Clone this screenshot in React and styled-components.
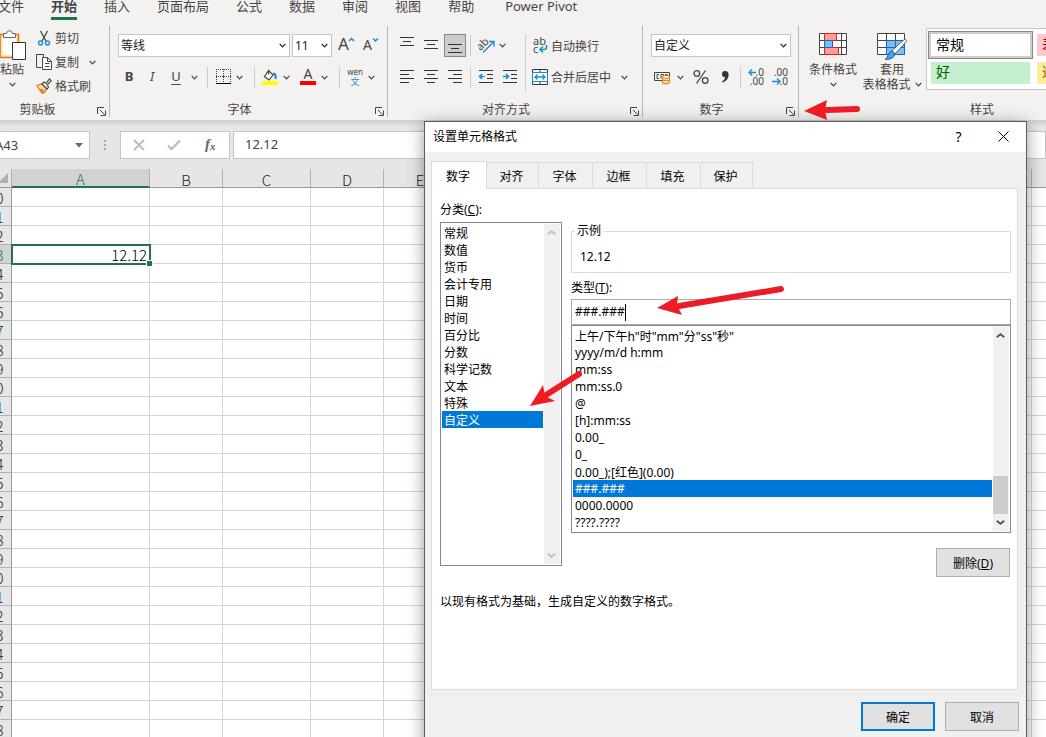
import React, { useState } from 'react';
import styled, { createGlobalStyle } from 'styled-components';

const uiFont = '"Noto Sans", "Noto Sans CJK SC", sans-serif';
const cellFont = '"Noto Sans CJK SC", "Noto Sans", sans-serif';

const ink = '#444444';
const blue = '#1e8bcd';
const green = '#217346';
const select = '#0078d7';

const GlobalStyle = createGlobalStyle`
  * {
    box-sizing: border-box;
  }

  body {
    margin: 0;
    font-family: ${uiFont};
    font-size: 12px;
    color: #000;
  }

  button, input, select {
    font: inherit;
    color: inherit;
    margin: 0;
    padding: 0;
    border: 0;
    border-radius: 0;
    background: none;
    outline: none;
  }

  svg {
    display: block;
    flex: none;
  }
`;

const Page = styled.div`
  position: relative;
  display: flex;
  flex-direction: column;
  height: 100vh;
  overflow: hidden;
  background: #e6e6e6;
`;

/* ---------- ribbon ---------- */

const Ribbon = styled.header`
  flex: none;
  background: #f3f2f1;
  color: ${ink};
  height: 120px;
`;

const RibbonTabs = styled.nav`
  display: flex;
  gap: 27px;
  height: 20px;
  margin-left: -2px;
  font-size: 13px;
`;

const RibbonTab = styled.button`
  line-height: 12px;
  padding-bottom: 5px;
  white-space: nowrap;
  border-bottom: 3px solid ${p => (p.$active ? green : 'transparent')};
  font-weight: ${p => (p.$active ? 700 : 400)};

  &:last-child {
    margin-left: 4px;
  }
`;

const Groups = styled.div`
  display: flex;
  padding-top: 6px;
  margin-left: -16px;
`;

const GroupBox = styled.section`
  display: flex;
  flex: none;
  flex-direction: column;
  justify-content: space-between;
  width: ${p => p.$width}px;
  height: 91px;
  border-right: 1px solid #b8b6b4;
`;

const GroupBody = styled.div`
  display: flex;
  padding: 8px 7px 0 8px;
`;

const GroupFooter = styled.div`
  display: flex;
  align-items: center;
  height: 15px;
  padding-right: 3px;
`;

const GroupName = styled.span`
  flex: 1;
  text-align: center;
  line-height: 15px;
`;

const Launcher = styled.button`
  margin-left: 6px;
  padding-top: 3px;
`;

const Rows = styled.div`
  display: flex;
  flex-direction: column;
  gap: 9px;
`;

const Row = styled.div`
  display: flex;
  align-items: center;
  height: ${p => p.$height || 22}px;
`;

const Tool = styled.button`
  display: flex;
  align-items: center;
  justify-content: center;
  gap: 3px;
  flex: none;
  width: ${p => (p.$width ? p.$width + 'px' : 'auto')};
  height: ${p => (p.$pressed ? 23 : 22)}px;
  margin-left: ${p => p.$gap || 0}px;
  white-space: nowrap;
  background: ${p => (p.$pressed ? '#cdcccb' : 'none')};
  border: ${p => (p.$pressed ? '1px solid #8a8886' : '0')};
`;

const Letter = styled.span`
  font-size: 13px;
  line-height: 16px;
  padding-bottom: 2px;
  font-weight: ${p => (p.$bold ? 700 : 400)};
  font-style: ${p => (p.$italic ? 'italic' : 'normal')};
  text-decoration: ${p => (p.$underline ? 'underline' : 'none')};
  text-underline-offset: 3px;
`;

const Divider = styled.span`
  flex: none;
  width: 1px;
  height: ${p => p.$height || 21}px;
  margin: 0 ${p => p.$right}px 0 ${p => p.$left}px;
  background: #cfcdcb;
`;

const ComboBox = styled.label`
  display: grid;
  align-items: center;
  width: ${p => p.$width}px;
  height: 23px;
  border: 1px solid #c6c6c6;
  background: #fff;

  & + & {
    margin-left: 2px;
  }

  > * {
    grid-area: 1 / 1;
  }

  svg {
    justify-self: end;
    margin-right: 3px;
    pointer-events: none;
  }
`;

const ComboSelect = styled.select`
  appearance: none;
  width: 100%;
  height: 21px;
  padding-left: 2px;
  line-height: 21px;
  color: #222;
`;

const BigTool = styled.button`
  display: flex;
  flex-direction: column;
  align-items: center;
  width: ${p => p.$width}px;
  line-height: 15px;
  white-space: nowrap;
`;

const BigIcon = styled.span`
  display: flex;
  align-items: flex-start;
  height: ${p => p.$height || 29}px;
`;

const BigLine = styled.span`
  display: flex;
  align-items: center;
  justify-content: center;
  gap: 4px;
  height: 15px;
`;

const ClipBody = styled(GroupBody)`
  align-items: flex-start;
  padding: 0 0 0 7px;

  ${BigTool} {
    padding-top: 4px;
  }
`;

const ClipList = styled.div`
  display: flex;
  flex-direction: column;
  align-items: flex-start;
  margin-left: 3px;

  button {
    height: 24px;
  }
`;

const StyleBody = styled(GroupBody)`
  padding: 2px 0 0 5px;
  align-items: flex-start;
`;

const BigTools = styled.div`
  display: flex;
  padding-top: 5px;
`;

const Gallery = styled.div`
  display: grid;
  grid-template-columns: repeat(2, 105px);
  grid-auto-rows: 28px;
  gap: 0 1px;
  height: 62px;
  margin-left: 4px;
  padding: 2px 1px;
  border: 1px solid #c8c6c4;
  background: #fff;
  font-size: 14px;
`;

const StyleCell = styled.button`
  text-align: left;
  line-height: 19px;
  padding: 0 5px 3px;
  color: ${p => p.$color};
  background: ${p => p.$fill} padding-box;
  border: 3px solid transparent;
  ${p => p.$active && `
    padding: 0 7px 1px;
    border: 1px solid #8a8886;
    box-shadow: inset 0 0 0 2px #cfcdcb;
  `}
`;

/* ---------- formula bar ---------- */

const FormulaBar = styled.div`
  display: flex;
  flex: none;
  align-items: flex-start;
  height: 49px;
  padding-top: 11px;
  background: linear-gradient(#cecece, #e6e6e6 7px);
  color: ${ink};
`;

const NameBox = styled.label`
  display: flex;
  align-items: center;
  width: 110px;
  height: 28px;
  margin-left: -20px;
  padding: 0 6px 0 14px;
  border: 1px solid #c6c6c6;
  background: #fff;

  input {
    flex: 1;
    min-width: 0;
    font-size: 13px;
  }
`;

const Grip = styled.span`
  display: grid;
  gap: 2px;
  margin: 9px 14px 0;

  i {
    width: 2px;
    height: 2px;
    background: #a6a6a6;
  }
`;

const EntryButtons = styled.div`
  display: flex;
  align-items: center;
  justify-content: space-between;
  width: 110px;
  height: 28px;
  padding: 0 12px;
  border: 1px solid #c6c6c6;
  background: #fff;
`;

const FormulaInput = styled.input`
  flex: 1;
  height: 28px;
  margin-left: 3px;
  padding: 0 11px 2px;
  border: 1px solid #c6c6c6;
  background: #fff;
  font-size: 13px;
`;

/* ---------- sheet ---------- */

const SheetArea = styled.main`
  flex: 1;
  min-height: 0;
  overflow: hidden;
  margin-left: -20px;
  background: #fff;
`;

const Sheet = styled.table`
  table-layout: fixed;
  width: 1125px;
  border-collapse: separate;
  border-spacing: 0;
  font-family: ${cellFont};
  font-size: 15px;
  font-weight: 300;
  line-height: 17px;

  th, td {
    height: 19px;
    padding: 0;
    font-weight: 300;
    overflow: visible;
  }
`;

const ColHead = styled.th`
  && {
    padding-top: 2px;
    line-height: 15px;
  }
  border-right: 1px solid #b1b1b1;
  border-bottom: ${p => (p.$active ? `2px solid ${green}` : '1px solid #999')};
  background: ${p => (p.$active ? '#d2d2d2' : '#e6e6e6')};
  color: ${p => (p.$active ? green : '#222')};
`;

const Corner = styled.th`
  background: #e6e6e6;
  border-right: 1px solid #b1b1b1;
  border-bottom: 1px solid #999;

  svg {
    margin: 0 3px 0 auto;
  }
`;

const RowHead = styled.th`
  border-right: 1px solid #999;
  border-bottom: 1px solid #b1b1b1;
  background: ${p => (p.$active ? '#d2d2d2' : '#e6e6e6')};
  color: ${p => (p.$active ? green : '#222')};
`;

const Cell = styled.td`
  border-right: 1px solid #d4d4d4;
  border-bottom: 1px solid #d4d4d4;
`;

const ActiveCell = styled(Cell)`
  && {
    padding-right: 2px;
  }
  position: relative;
  text-align: right;
  outline: 2px solid ${green};
  outline-offset: -1px;

  &::after {
    content: '';
    position: absolute;
    right: -3px;
    bottom: -3px;
    width: 5px;
    height: 5px;
    background: ${green};
    box-shadow: 0 0 0 1px #fff;
  }
`;

/* ---------- dialog ---------- */

const DialogBox = styled.div`
  position: absolute;
  top: 121px;
  left: 424px;
  right: 19px;
  border: 1px solid #5c5c5c;
  background: #f0f0f0;
  box-shadow: 0 3px 16px rgba(0, 0, 0, 0.4);
`;

const TitleBar = styled.div`
  display: flex;
  align-items: center;
  height: 30px;
  padding-left: 8px;
  background: #fff;

  h1 {
    flex: 1;
    margin: 0;
    padding-bottom: 2px;
    font-size: 12px;
    font-weight: 400;
  }
`;

const TitleButton = styled.button`
  display: flex;
  align-items: center;
  justify-content: center;
  width: 45px;
  height: 30px;
  padding-bottom: 2px;
  font-size: 14px;
`;

const DialogBody = styled.div`
  padding: 9px 7px 20px 6px;
`;

const TabStrip = styled.div`
  display: flex;
  align-items: flex-end;
`;

const DialogTab = styled.button`
  width: ${p => p.$width}px;
  height: ${p => (p.$active ? 28 : 26)}px;
  margin-bottom: ${p => (p.$active ? -1 : 0)}px;
  padding-right: 2px;
  border: 1px solid #dcdcdc;
  border-left-width: ${p => (p.$active ? 1 : 0)}px;
  border-bottom: 0;
  background: ${p => (p.$active ? '#fff' : '#f0f0f0')};
  z-index: 1;
`;

const Panel = styled.div`
  display: flex;
  flex-direction: column;
  min-height: 502px;
  margin-right: 1px;
  padding: 12px 6px 0 8px;
  border: 1px solid #dcdcdc;
  background: #fff;
`;

const Columns = styled.div`
  display: flex;
  align-items: flex-start;
  gap: 9px;
`;

const CategoryColumn = styled.div`
  width: 122px;
`;

const FormatColumn = styled.div`
  display: flex;
  flex: 1;
  flex-direction: column;
  min-width: 0;
`;

const FieldLabel = styled.label`
  display: block;
  height: ${p => p.$height}px;
  line-height: 18px;
`;

const Sample = styled.fieldset`
  height: 50px;
  margin: 22px 0 6px;
  padding: 9px 8px 0;
  border: 1px solid #dcdcdc;
  line-height: 18px;
  min-width: 0;

  legend {
    padding: 0 2px;
    margin-left: -5px;
    line-height: 16px;
  }
`;

const TypeField = styled.div`
  display: flex;
  align-items: center;
  height: 26px;
  padding: 0 3px;
  border: 1px solid #ababab;

  input {
    field-sizing: content;
    height: 20px;
    padding-bottom: 2px;
  }
`;

const Caret = styled.span`
  width: 1px;
  height: 17px;
  background: #000;
`;

const ListFrame = styled.div`
  display: flex;
  height: ${p => p.$height}px;
  padding: 1px;
  border: 1px solid #828790;
  background: #fff;
`;

const ListSelect = styled.select`
  appearance: none;
  flex: 1;
  min-width: 0;
  margin-right: 1px;
  overflow: hidden;
  background: #fff;

  option {
    height: 17px;
    min-height: 17px;
    padding: 0 2px 2px;
    line-height: 15px;
    color: #000;
  }

  option:checked {
    background: linear-gradient(${select}, ${select});
    color: #fff;
    -webkit-text-fill-color: #fff;
  }
`;

const Track = styled.div`
  display: flex;
  flex-direction: column;
  justify-content: space-between;
  width: 16px;
  background: #f0f0f0;
`;

const TrackButton = styled.button`
  display: flex;
  align-items: center;
  justify-content: center;
  width: 15px;
  height: 17px;
`;

const Thumb = styled.span`
  height: 38px;
  width: 15px;
  margin-top: auto;
  background: #cdcdcd;
`;

const PushButton = styled.button`
  width: 74px;
  height: 29px;
  border: ${p => (p.$primary ? `2px solid ${select}` : '1px solid #adadad')};
  background: #e1e1e1;
`;

const DeleteRow = styled.div`
  display: flex;
  justify-content: flex-end;
  margin-top: 15px;
  padding-right: 1px;
`;

const Hint = styled.p`
  margin: 15px 0 0;
  line-height: 20px;
`;

const DialogFooter = styled.div`
  display: flex;
  justify-content: flex-end;
  gap: 10px;
  margin: 12px 0 0;
`;

const ArrowLayer = styled.svg`
  position: absolute;
  top: 0;
  left: 0;
  pointer-events: none;
`;

/* ---------- icons ---------- */

const Icon = ({ w = 16, h = 16, children, ...rest }) => (
  <svg width={w} height={h} viewBox={`0 0 ${w} ${h}`} fill="none" stroke={ink} aria-hidden="true" {...rest}>
    {children}
  </svg>
);

const Chevron = ({ color = ink, up, w = 7, weight = 1.2 }) => (
  <Icon w={w} h={5} stroke={color} strokeWidth={weight}>
    <path d={up ? `M.7 4.2 ${w / 2} 1.2 ${w - 0.7} 4.2` : `M.7 .8 ${w / 2} 3.8 ${w - 0.7} .8`} />
  </Icon>
);

const Drop = ({ width = 16, label }) => (
  <Tool $width={width} aria-label={label}>
    <Chevron />
  </Tool>
);

const LauncherIcon = () => (
  <Icon w={9} h={9}>
    <path d="M.5 7V.5H7M3 3l4.5 4.5M8.5 3.5v5h-5" />
  </Icon>
);

const PasteIcon = () => (
  <Icon w={28} h={30}>
    <path d="M2 4.5h18.500v23H2z" stroke="#e07b10" strokeWidth="1.6" fill="#fbe3b4" />
    <path d="M4.500 7h13.500v18H4.500z" fill="#fff" stroke="none" />
    <path d="M5.500 7.500v-4h3.200a2.800 2.800 0 0 1 5.600 0h3.200v4z" fill="#fff" stroke="#666" />
    <path d="M14.500 12.500h13v17h-13z" fill="#fff" stroke="#333" />
  </Icon>
);

const CutIcon = () => (
  <Icon>
    <path d="M4.500 1 10 11M11.500 1 6 11" strokeWidth="1.300" />
    <circle cx="4.500" cy="13" r="2" stroke={blue} strokeWidth="1.400" />
    <circle cx="11.500" cy="13" r="2" stroke={blue} strokeWidth="1.400" />
  </Icon>
);

const CopyIcon = () => (
  <Icon>
    <path d="M5.500 13.500h-5V.5h7v3" />
    <path d="M6.500 3.500h5l4 4v8h-9zM11.500 3.500v4h4M9 9.500h4.500M9 12.500h4.500" fill="#fff" />
  </Icon>
);

const BrushIcon = () => (
  <Icon>
    <path d="M.8 7.500 6 6l4.500 4.500L9 14l-2.500 1.500L4 12.500z" fill="#fbd9a8" stroke="#e07b10" strokeWidth="1.200" />
    <path d="M3 10.500 8 12l-1.500 3z" fill="#e07b10" stroke="none" />
    <path d="m6 6 2-2 2 1.500L13.500 1l1.700 1.700L11 7l1.500 2-1.500 2z" fill="#fff" strokeWidth="1.200" />
  </Icon>
);

const GrowIcon = ({ down }) => (
  <Icon w={17} h={17}>
    <text x="0" y="13" fontSize={down ? 14 : 17} fill={ink} stroke="none">A</text>
    <path d={down ? 'M10 1.500l2.500 2.500L15 1.500' : 'M11 4 13.500 1.500 16 4'} stroke={blue} strokeWidth="1.500" />
  </Icon>
);

const BordersIcon = () => (
  <Icon>
    <path d="M1 .5h15M1 7.500h15M1.500 0v14M8.500 0v14M15.500 0v14" strokeDasharray="1 1" />
    <path d="M7 7.500h3M8.500 6v3" />
    <path d="M1 14.500h15" stroke="#000" />
  </Icon>
);

const FillIcon = () => (
  <Icon>
    <path d="M6.500 1.500 11 6 7 11 2.500 7.500zM6.500 1.500v4" fill="#fff" strokeWidth="1.200" />
    <path d="M11 4.500c2.500 0 3 2 2.500 5.500" stroke={blue} strokeWidth="2.200" />
    <path d="M0 12h16v4H0z" fill="#ff0" stroke="none" />
  </Icon>
);

const FontColorIcon = () => (
  <Icon>
    <text x="3.500" y="10" fontSize="14" fill={ink} stroke="none">A</text>
    <path d="M0 12h16v4H0z" fill="#f00" stroke="none" />
  </Icon>
);

const PhoneticIcon = () => (
  <Icon w={16} h={17}>
    <text x="8" y="6" fontSize="8" textAnchor="middle" fill={ink} stroke="none">wén</text>
    <text x="8" y="16" fontSize="9" textAnchor="middle" fill={blue} stroke="none">文</text>
  </Icon>
);

const LinesIcon = ({ lines, h = 16 }) => (
  <Icon w={14} h={h} stroke="#333">
    {lines.map(([x, y, len]) => (
      <path key={y} d={`M${x} ${y + 0.5}h${len}`} />
    ))}
  </Icon>
);

const OrientIcon = () => (
  <Icon w={17} h={17}>
    <text x="-1" y="10" fontSize="11" fill={ink} stroke="none" transform="rotate(-45 6 8)">ab</text>
    <path d="M5 15.500 15.500 5M11 4.500h5v5" stroke={blue} strokeWidth="1.400" />
  </Icon>
);

const IndentIcon = ({ right }) => (
  <Icon>
    <path d="M1 1.500h14M9 5.500h6M9 9.500h6M1 13.500h14" stroke="#333" />
    <path d={right ? 'M1 7.500h5M4 5l2.500 2.500L4 10' : 'M1.500 7.500h5M4 5 1.500 7.500 4 10'} stroke={blue} strokeWidth="1.500" />
  </Icon>
);

const WrapIcon = () => (
  <Icon w={16} h={17}>
    <text x="1" y="8" fontSize="11" fill={ink} stroke="none">ab</text>
    <text x="1" y="16" fontSize="11" fill={ink} stroke="none">c</text>
    <path d="M14.500 8v2.500q0 2-2.500 2H8.500M11 9.500l-3 3 3 3" stroke={blue} strokeWidth="1.600" />
  </Icon>
);

const MergeIcon = () => (
  <Icon>
    <path d="M.5.5h15v15H.5zM8 0v4M8 12v4" stroke="#333" fill="#fff" />
    <path d="M.5 3.500h15v9H.5z" fill="#fff" stroke={blue} />
    <path d="M3 8h10M5.500 5.500 3 8l2.500 2.500M10.500 5.500 13 8l-2.500 2.500" stroke={blue} strokeWidth="1.400" />
  </Icon>
);

const CurrencyIcon = () => (
  <Icon w={17} h={16}>
    <path d="M.5 3.500h15v8H.5z" />
    <path d="M5 5.500H3v4h2M7 9.500v-4h2.500v4M13.500 5.500h-2v2" />
    <path d="M8.500 8v6q3.500 2 7 0V8" fill="#fbe3b4" stroke="#e07b10" />
    <ellipse cx="12" cy="8" rx="3.500" ry="1.500" fill="#fff" stroke="#e07b10" />
    <path d="M8.500 11q3.500 2 7 0" stroke="#e07b10" />
  </Icon>
);

const DecimalIcon = ({ less }) => (
  <Icon w={16} h={18}>
    <text x="16" y="8" fontSize="10" textAnchor="end" fill={ink} stroke="none">{less ? '.00' : '.0'}</text>
    <text x="16" y="17" fontSize="10" textAnchor="end" fill={ink} stroke="none">{less ? '.0' : '.00'}</text>
    <path
      d={less ? 'M0 13.500h8M5 10.500l3 3-3 3' : 'M8 4.500H1M4 1.500l-3 3 3 3'}
      stroke={blue}
      strokeWidth="1.400"
    />
  </Icon>
);

const CondIcon = () => (
  <Icon w={28} h={23}>
    <path d="M.5.5h27v21H.5zM.5 7.500h27M.5 14.500h27M5.500 0v22M22.500 0v22" stroke="#444" fill="#fff" />
    <path d="M5.500.5h12v7h-12zM5.500 14.500h14v7h-14z" fill="#ff9b9b" stroke="#e2231a" />
    <path d="M5.500 7.500h8v7h-8z" fill="#83bdf0" stroke="#0f6cbd" />
  </Icon>
);

const TableIcon = () => (
  <Icon w={30} h={28}>
    <path d="M.5.5h27v21H.5zM.5 7.500h27M.5 14.500h27M9.500 0v22M18.500 0v22" stroke="#444" fill="#fff" />
    <path d="M9.500 7.500h18v14h-18zM9.500 14.500h18M18.500 7.500v14" fill="#83bdf0" stroke="#0f6cbd" />
    <path d="M28.500 6.500q2 .5 0 3L18 21l-3.500-3L26 7.500q1.500-1.500 2.500-1z" fill="#fff" stroke="#555" />
    <path d="M14.500 18q3 1 3.500 3-1 5.500-10 5.500 2.500-1.500 3-4.500 1-3 3.500-4z" fill="#4a9fe0" stroke="#0f6cbd" />
  </Icon>
);

/* ---------- data ---------- */

const ribbonTabs = ['文件', '开始', '插入', '页面布局', '公式', '数据', '审阅', '视图', '帮助', 'Power Pivot'];

const columns = [
  ['A', 138], ['B', 73], ['C', 88], ['D', 73], ['E', 73], ['F', 137], ['G', 73],
  ['H', 73], ['I', 73], ['J', 73], ['K', 73], ['L', 73], ['M', 73],
];

const rowNumbers = Array.from({ length: 29 }, (_, i) => 40 + i);

const dialogTabs = [
  ['数字', 56], ['对齐', 52], ['字体', 54], ['边框', 54], ['填充', 54], ['保护', 52],
];

const categories = [
  '常规', '数值', '货币', '会计专用', '日期', '时间', '百分比', '分数', '科学记数', '文本', '特殊', '自定义',
];

const formats = [
  '上午/下午h"时"mm"分"ss"秒"', 'yyyy/m/d h:mm', 'mm:ss', 'mm:ss.0', '@', '[h]:mm:ss', '0.00_', '0_',
  '0.00_);[红色](0.00)', '###.###', '0000.0000', '????.????',
];

/* ---------- pieces ---------- */

const Group = ({ name, width, launcher = true, children }) => (
  <GroupBox $width={width}>
    {children}
    <GroupFooter>
      <GroupName>{name}</GroupName>
      {launcher && (
        <Launcher aria-label={`${name}设置`}>
          <LauncherIcon />
        </Launcher>
      )}
    </GroupFooter>
  </GroupBox>
);

const Combo = ({ label, value, width }) => (
  <ComboBox $width={width}>
    <ComboSelect aria-label={label} defaultValue={value}>
      <option>{value}</option>
    </ComboSelect>
    <Chevron color="#222" />
  </ComboBox>
);

const ClipboardGroup = () => (
  <Group name="剪贴板" width={126}>
    <ClipBody>
      <BigTool $width={42}>
        <BigIcon $height={32}>
          <PasteIcon />
        </BigIcon>
        <BigLine>粘贴</BigLine>
        <BigLine>
          <Chevron />
        </BigLine>
      </BigTool>
      <ClipList>
        <Tool><CutIcon />剪切</Tool>
        <Row $height={24}>
          <Tool><CopyIcon />复制</Tool>
          <Drop width={27} label="复制选项" />
        </Row>
        <Tool><BrushIcon />格式刷</Tool>
      </ClipList>
    </ClipBody>
  </Group>
);

const FontGroup = () => (
  <Group name="字体" width={278}>
    <GroupBody>
      <Rows>
        <Row $height={23}>
          <Combo label="字体" value="等线" width={172} />
          <Combo label="字号" value="11" width={40} />
          <Tool $width={17} $gap={6} aria-label="增大字号"><GrowIcon /></Tool>
          <Tool $width={17} $gap={8} aria-label="减小字号"><GrowIcon down /></Tool>
        </Row>
        <Row>
          <Tool $width={22}><Letter $bold>B</Letter></Tool>
          <Tool $width={24}><Letter $italic>I</Letter></Tool>
          <Tool $width={24}><Letter $underline>U</Letter></Tool>
          <Drop width={12} label="下划线" />
          <Divider $left={7} $right={7} />
          <Tool $width={16} aria-label="边框"><BordersIcon /></Tool>
          <Drop label="边框选项" />
          <Divider $left={7} $right={7} />
          <Tool $width={16} aria-label="填充颜色"><FillIcon /></Tool>
          <Drop label="填充颜色选项" />
          <Tool $width={16} $gap={6} aria-label="字体颜色"><FontColorIcon /></Tool>
          <Drop label="字体颜色选项" />
          <Divider $left={7} $right={7} />
          <Tool $width={16} aria-label="拼音"><PhoneticIcon /></Tool>
          <Drop label="拼音选项" />
        </Row>
      </Rows>
    </GroupBody>
  </Group>
);

const AlignGroup = () => (
  <Group name="对齐方式" width={255}>
    <GroupBody>
      <Rows>
        <Row $height={23}>
          <Tool $width={22} aria-label="顶端对齐">
            <LinesIcon h={17} lines={[[0, 0, 14], [3, 4, 8], [0, 8, 14]]} />
          </Tool>
          <Tool $width={22} $gap={2} aria-label="垂直居中">
            <LinesIcon h={17} lines={[[0, 3, 14], [3, 7, 8], [0, 11, 14]]} />
          </Tool>
          <Tool $width={22} $gap={2} $pressed aria-label="底端对齐">
            <LinesIcon h={17} lines={[[0, 7, 14], [3, 11, 8], [0, 15, 14]]} />
          </Tool>
          <Divider $left={4} $right={7} />
          <Tool $width={16} aria-label="方向"><OrientIcon /></Tool>
          <Drop label="方向选项" />
        </Row>
        <Row>
          <Tool $width={22} aria-label="左对齐">
            <LinesIcon lines={[[0, 1, 14], [0, 5, 9], [0, 9, 14], [0, 13, 9]]} />
          </Tool>
          <Tool $width={22} $gap={2} aria-label="居中">
            <LinesIcon lines={[[0, 1, 14], [3, 5, 8], [0, 9, 14], [3, 13, 8]]} />
          </Tool>
          <Tool $width={22} $gap={2} aria-label="右对齐">
            <LinesIcon lines={[[0, 1, 14], [5, 5, 9], [0, 9, 14], [5, 13, 9]]} />
          </Tool>
          <Divider $left={4} $right={7} />
          <Tool $width={16} aria-label="减少缩进量"><IndentIcon /></Tool>
          <Tool $width={16} $gap={8} aria-label="增加缩进量"><IndentIcon right /></Tool>
        </Row>
      </Rows>
      <Divider $left={7} $right={6} $height={58} />
      <Rows>
        <Row $height={23}>
          <Tool><WrapIcon />自动换行</Tool>
        </Row>
        <Row>
          <Tool><MergeIcon />合并后居中</Tool>
          <Drop width={26} label="合并选项" />
        </Row>
      </Rows>
    </GroupBody>
  </Group>
);

const NumberGroup = () => (
  <Group name="数字" width={156}>
    <GroupBody>
      <Rows>
        <Row $height={23}>
          <Combo label="数字格式" value="自定义" width={140} />
        </Row>
        <Row>
          <Tool $width={17} $gap={3} aria-label="会计数字格式"><CurrencyIcon /></Tool>
          <Drop width={18} label="会计选项" />
          <Tool $width={24} aria-label="百分比">
            <Icon w={16} h={16} strokeWidth="1.300">
              <circle cx="3.800" cy="4.500" r="2.800" />
              <circle cx="12.200" cy="11.500" r="2.800" />
              <path d="M12.500 1.500 3.500 14.500" />
            </Icon>
          </Tool>
          <Tool $width={24} aria-label="千位分隔">
            <Icon w={8} h={14}>
              <path d="M4 1a3.200 3.200 0 0 1 3.600 3.500C7.600 8.500 5 11.500 1.500 12.500L1 11.500Q3.800 10 4.200 7.200A3.100 3.100 0 0 1 4 1z" fill="#333" stroke="none" />
            </Icon>
          </Tool>
          <Divider $left={3} $right={7} />
          <Tool $width={16} aria-label="增加小数位数"><DecimalIcon /></Tool>
          <Tool $width={16} $gap={8} aria-label="减少小数位数"><DecimalIcon less /></Tool>
        </Row>
      </Rows>
    </GroupBody>
  </Group>
);

const StylesGroup = () => (
  <Group name="样式" width={370} launcher={false}>
    <StyleBody>
      <BigTools>
        <BigTool $width={58}>
          <BigIcon><CondIcon /></BigIcon>
          <BigLine>条件格式</BigLine>
          <BigLine><Chevron /></BigLine>
        </BigTool>
        <BigTool $width={60}>
          <BigIcon><TableIcon /></BigIcon>
          <BigLine>套用</BigLine>
          <BigLine>表格格式<Chevron /></BigLine>
        </BigTool>
      </BigTools>
      <Gallery>
        <StyleCell $active $color="#000" $fill="#fff">常规</StyleCell>
        <StyleCell $color="#9c0006" $fill="#ffc7ce">差</StyleCell>
        <StyleCell $color="#006100" $fill="#c6efce">好</StyleCell>
        <StyleCell $color="#9c5700" $fill="#ffeb9c">适中</StyleCell>
      </Gallery>
    </StyleBody>
  </Group>
);

const EditBar = () => (
  <FormulaBar>
    <NameBox>
      <input aria-label="名称框" defaultValue="A43" />
      <Icon w={8} h={5}>
        <path d="M0 0h8L4 4.500z" fill="#666" stroke="none" />
      </Icon>
    </NameBox>
    <Grip><i /><i /><i /></Grip>
    <EntryButtons>
      <button aria-label="取消输入">
        <Icon w={12} h={12} stroke="#bdbdbd" strokeWidth="1.800"><path d="M1 1l10 10M11 1 1 11" /></Icon>
      </button>
      <button aria-label="输入">
        <Icon w={14} h={12} stroke="#bdbdbd" strokeWidth="2.400"><path d="M1 6.500 4.500 10 13 1.500" /></Icon>
      </button>
      <button aria-label="插入函数">
        <Icon w={14} h={16}>
          <text x="2" y="12" fontSize="15" fontStyle="italic" fontWeight="700" fontFamily="Liberation Serif, serif" fill="#666" stroke="none">f</text>
          <text x="7" y="13" fontSize="11" fontStyle="italic" fontWeight="700" fontFamily="Liberation Serif, serif" fill="#666" stroke="none">x</text>
        </Icon>
      </button>
    </EntryButtons>
    <FormulaInput aria-label="编辑栏" defaultValue="12.12" />
  </FormulaBar>
);

const Worksheet = () => (
  <SheetArea>
    <Sheet>
      <colgroup>
        <col width={32} />
        {columns.map(([name, width]) => <col key={name} width={width} />)}
      </colgroup>
      <thead>
        <tr>
          <Corner aria-label="全选">
            <Icon w={10} h={10}><path d="M10 0v10H0z" fill="#b1b1b1" stroke="none" /></Icon>
          </Corner>
          {columns.map(([name]) => <ColHead key={name} $active={name === 'A'}>{name}</ColHead>)}
        </tr>
      </thead>
      <tbody>
        {rowNumbers.map(n => (
          <tr key={n}>
            <RowHead $active={n === 43}>{n}</RowHead>
            {columns.map(([name]) =>
              n === 43 && name === 'A' ? <ActiveCell key={name}>12.12</ActiveCell> : <Cell key={name} />
            )}
          </tr>
        ))}
      </tbody>
    </Sheet>
  </SheetArea>
);

const ListBox = ({ id, label, items, value, onChange, height, disabled }) => (
  <ListFrame $height={height}>
    <ListSelect id={id} aria-label={label} size={items.length} value={value} onChange={e => onChange(e.target.value)}>
      {items.map(item => <option key={item}>{item}</option>)}
    </ListSelect>
    <Track>
      <TrackButton aria-label="向上"><Chevron up w={9} weight={1.8} color={disabled ? '#bfbfbf' : '#555'} /></TrackButton>
      {!disabled && <Thumb />}
      <TrackButton aria-label="向下"><Chevron w={9} weight={1.8} color={disabled ? '#bfbfbf' : '#555'} /></TrackButton>
    </Track>
  </ListFrame>
);

const FormatDialog = () => {
  const [category, setCategory] = useState('自定义');
  const [format, setFormat] = useState('###.###');

  return (
    <DialogBox role="dialog" aria-label="设置单元格格式">
      <TitleBar>
        <h1>设置单元格格式</h1>
        <TitleButton aria-label="帮助">?</TitleButton>
        <TitleButton aria-label="关闭">
          <Icon w={11} h={11} stroke="#000"><path d="M.5.5l10 10M10.500.5l-10 10" /></Icon>
        </TitleButton>
      </TitleBar>
      <DialogBody>
        <TabStrip role="tablist">
          {dialogTabs.map(([name, width], i) => (
            <DialogTab key={name} role="tab" aria-selected={i === 0} $active={i === 0} $width={width}>
              {name}
            </DialogTab>
          ))}
        </TabStrip>
        <Panel>
          <Columns>
            <CategoryColumn>
              <FieldLabel htmlFor="category" $height={21}>分类(<u>C</u>):</FieldLabel>
              <ListBox id="category" items={categories} value={category} onChange={setCategory} height={344} disabled />
            </CategoryColumn>
            <FormatColumn>
              <Sample>
                <legend>示例</legend>
                12.12
              </Sample>
              <FieldLabel htmlFor="type" $height={20}>类型(<u>T</u>):</FieldLabel>
              <TypeField>
                <input id="type" value={format} onChange={e => setFormat(e.target.value)} />
                <Caret />
              </TypeField>
              <ListBox id="formats" label="类型列表" items={formats} value={format} onChange={setFormat} height={208} />
              <DeleteRow>
                <PushButton>删除(<u>D</u>)</PushButton>
              </DeleteRow>
            </FormatColumn>
          </Columns>
          <Hint>以现有格式为基础，生成自定义的数字格式。</Hint>
        </Panel>
        <DialogFooter>
          <PushButton $primary>确定</PushButton>
          <PushButton>取消</PushButton>
        </DialogFooter>
      </DialogBody>
    </DialogBox>
  );
};

const Arrows = () => (
  <ArrowLayer width="1046" height="737" fill="#ed1c24" stroke="#ed1c24" strokeLinecap="round">
    <path d="M804 111 827 100 825 110 827 120z" stroke="none" />
    <path d="M827 110 857 109" strokeWidth="6" />
    <path d="M657 308 678 296 677 305 682 315z" stroke="none" />
    <path d="M679 306 781 289" strokeWidth="6" />
    <path d="M530 406 543 385 545 396 555 401z" stroke="none" />
    <path d="M546 395 579 374" strokeWidth="6" />
  </ArrowLayer>
);

const App = () => (
  <Page>
    <GlobalStyle />
    <Ribbon>
      <RibbonTabs>
        {ribbonTabs.map(name => (
          <RibbonTab key={name} $active={name === '开始'}>{name}</RibbonTab>
        ))}
      </RibbonTabs>
      <Groups>
        <ClipboardGroup />
        <FontGroup />
        <AlignGroup />
        <NumberGroup />
        <StylesGroup />
      </Groups>
    </Ribbon>
    <EditBar />
    <Worksheet />
    <FormatDialog />
    <Arrows />
  </Page>
);

export default App;
